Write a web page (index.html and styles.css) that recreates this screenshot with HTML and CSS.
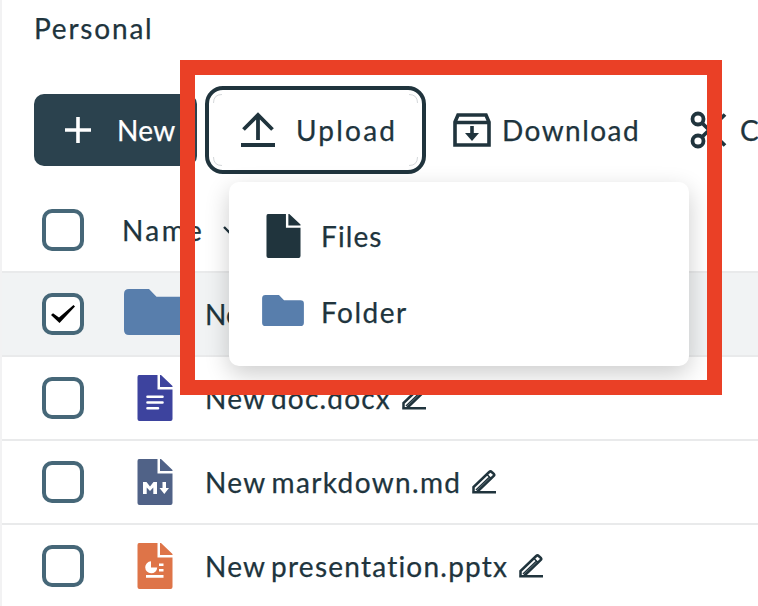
FILE: index.html
```html
<!DOCTYPE html>
<html lang="en">
<head>
<meta charset="utf-8">
<title>Personal</title>
<link rel="stylesheet" href="styles.css">
</head>
<body>
<svg class="defs" width="0" height="0">
  <symbol id="page" viewBox="0 0 36 46"><path d="M2 0H20.500V14.500H35.500V44Q35.500 46 33.500 46H2.500Q.5 46 .5 44V2Q.5 0 2 0ZM23 0H24L35.500 11V12H23Z"/></symbol>
  <symbol id="folder" viewBox="0 0 62 46"><path d="M5 0H25L32.500 7.800H57Q62 7.800 62 12.500V41Q62 46 57 46H5Q0 46 0 41V5Q0 0 5 0Z"/></symbol>
  <symbol id="pencil" viewBox="0 0 24 24"><path d="M1.500 21.500V17L17.200 2Q18.500 .8 19.700 2L22 4.200Q22.600 5 22 5.700L5.500 21.500M.2 22.200H24" fill="none" stroke="currentColor" stroke-width="2.500"/><path d="M4 20L17 7.500M15 4.500L19.500 9" fill="none" stroke="currentColor" stroke-width="1.600"/></symbol>
</svg>
<main class="app">
  <h1 class="title"><span class="t-personal">Personal</span></h1>
  <div class="toolbar">
    <button class="btn new"><svg width="26" height="26" viewBox="0 0 26 26"><path d="M13 0V26M0 13H26" stroke="#fff" stroke-width="3.600"/></svg><span class="t-new">New</span></button>
    <button class="btn upload"><svg class="arcs" width="205" height="72" viewBox="0 0 205 72"><path d="M.5 9Q.5 .5 9 .5M196 .5Q204.500 .5 204.500 9M.5 63Q.5 71.500 9 71.500M196 71.500Q204.500 71.500 204.500 63" fill="none" stroke="#c9cdd0" stroke-width=".8"/></svg><svg width="34" height="36" viewBox="0 0 34 36"><path d="M17 28V3M2.500 17.500L17 3L31.500 17.500" fill="none" stroke="currentColor" stroke-width="3.800"/><path d="M0 33H34" stroke="currentColor" stroke-width="4"/></svg><span class="t-upload">Upload</span></button>
    <button class="btn download"><svg width="38" height="34" viewBox="0 0 38 34"><path d="M2 9L5 2H33L36 9V32H2ZM2 9.500H36" fill="none" stroke="currentColor" stroke-width="3.600"/><path d="M17.200 13H20.800V20H26L19 28L12 20H17.200Z"/></svg><span class="t-download">Download</span></button>
    <button class="btn cut"><svg width="38" height="38" viewBox="0 0 38 38"><g fill="none" stroke="currentColor" stroke-width="3.800"><circle cx="8" cy="8" r="5.500"/><circle cx="8" cy="30" r="5.500"/><path d="M12 12L35 34.500M12 26L35 3.500"/></g></svg><span>Cut</span></button>
  </div>
  <div class="row head"><span class="box"></span><span class="t-name">Name</span><svg class="chevron" width="14" height="9" viewBox="0 0 14 9"><path d="M1 1L7 7L13 1" fill="none" stroke="currentColor" stroke-width="2.400"/></svg></div>
  <div class="row selected"><span class="box"><svg width="24" height="18" viewBox="0 0 24 18"><path d="M0 10L2 8.300L8 12.500L22.500 0L24 1.500L8.500 18Z" fill="#000"/></svg></span><span class="icon raised"><svg class="c-folder" width="62" height="46"><use href="#folder"/></svg></span><span>New folder</span></div>
  <div class="row"><span class="box"></span><span class="icon"><svg class="c-doc" width="36" height="46" viewBox="0 0 36 46"><use href="#page"/><path d="M10.500 21.700H25.500M10.500 27.500H25.500M10.500 33.300H21" stroke="#fff" stroke-width="2.600" stroke-linecap="round"/></svg></span><span class="t-doc">New doc.docx</span><svg class="pencil" width="24" height="24"><use href="#pencil"/></svg></div>
  <div class="row"><span class="box"></span><span class="icon"><svg class="c-md" width="36" height="46" viewBox="0 0 36 46"><use href="#page"/><path d="M6 35V23H9.500L13 27.500L16.500 23H20V35H16.300V28.500L13 32L9.700 28.500V35ZM25.500 23H29V29H32L27.300 35L22.500 29H25.500Z" fill="#fff"/></svg></span><span class="t-md">New markdown.md</span><svg class="pencil" width="24" height="24"><use href="#pencil"/></svg></div>
  <div class="row"><span class="box"></span><span class="icon"><svg class="c-ppt" width="36" height="46" viewBox="0 0 36 46"><use href="#page"/><path d="M14 18.300A6 6 0 1 0 20.200 24.500H14ZM22 20.500H26.500V23H22ZM22 26H26.500V28.500H22ZM9 32H26.500V34.800H9Z" fill="#fff"/></svg></span><span class="t-ppt">New presentation.pptx</span><svg class="pencil" width="24" height="24"><use href="#pencil"/></svg></div>
</main>
<div class="menu">
  <div class="item"><span class="slot"><svg width="35" height="44" viewBox="0 0 36 46" preserveAspectRatio="none"><use href="#page"/></svg></span><span class="t-files">Files</span></div>
  <div class="item"><span class="slot raised"><svg class="c-folder" width="42" height="31"><use href="#folder"/></svg></span><span class="t-folder">Folder</span></div>
</div>
<div class="highlight"></div>
</body>
</html>
```
FILE: styles.css
```css
* { box-sizing: border-box; }
body { margin: 0; width: 758px; height: 606px; overflow: hidden; position: relative; background: #fff; color: #20343d; font: 28px/36px Lato, "Open Sans", sans-serif; font-variant-ligatures: none; white-space: nowrap; -webkit-text-stroke: .25px currentColor; }
svg { display: block; flex: none; fill: currentColor; }
.defs { position: absolute; }
.app { height: 606px; overflow: hidden; border-left: 2px solid #f2f2f3; }
.title { margin: 0; height: 86px; padding: 10px 0 0 32px; font-size: 28px; font-weight: 400; line-height: 36px; }
.toolbar { display: flex; align-items: center; height: 88px; padding-left: 32px; }
.btn { display: flex; align-items: center; flex: none; height: 72px; margin: 0; padding: 0; border: 0; border-radius: 10px; background: none; color: inherit; font: inherit; }
.new { width: 163px; padding-left: 31px; gap: 26px; background: #2b424e; color: #fff; }
.upload { position: relative; width: 221px; height: 88px; margin-left: 8px; padding-left: 32px; gap: 21px; border: 4px solid #20343d; border-radius: 18px; }
.arcs { position: absolute; left: 4px; top: 4px; }
.download { width: 236px; padding-left: 27px; gap: 11px; }
.cut { margin-left: 28px; gap: 12px; }
.row { display: flex; align-items: center; height: 84px; padding-left: 40px; border-top: 2px solid #e9eaeb; }
.head { height: 97px; padding-top: 13px; border-color: transparent; }
.selected { background: #f1f3f4; }
.box { display: flex; align-items: center; justify-content: center; flex: none; width: 42px; height: 42px; border: 4px solid #466778; border-radius: 10px; background: #fff; }
.t-name { margin-left: 38px; letter-spacing: 2.400px; }
.t-personal { letter-spacing: 1.800px; }
.t-new { letter-spacing: .3px; }
.t-upload { letter-spacing: 2.200px; }
.t-download { letter-spacing: 1.450px; }
.t-doc, .t-md, .t-ppt { word-spacing: -3px; }
.t-doc { letter-spacing: 1.200px; }
.t-md { letter-spacing: 1.350px; }
.t-ppt { letter-spacing: 1.230px; }
.t-files { letter-spacing: 1.100px; }
.t-folder { letter-spacing: 1.500px; }
.chevron { margin-left: 19px; }
.icon { display: flex; justify-content: center; width: 62px; margin: 0 19px 0 40px; }
.raised { margin-bottom: 4px; }
.c-folder { color: #587eac; }
.c-doc { color: #3d439e; }
.c-md { color: #506287; }
.c-ppt { color: #de7448; }
.pencil { margin-left: 11px; }
.menu { position: absolute; left: 229px; top: 182px; width: 460px; height: 184px; padding: 16px 32px; border-radius: 10px; background: #fff; box-shadow: 0 8px 24px rgba(0,0,0,.2); }
.item { display: flex; align-items: center; gap: 16px; height: 76px; }
.slot { display: flex; justify-content: center; width: 44px; }
.highlight { position: absolute; left: 180px; top: 60px; width: 542px; height: 335px; border: 15px solid #ea4026; }
```
